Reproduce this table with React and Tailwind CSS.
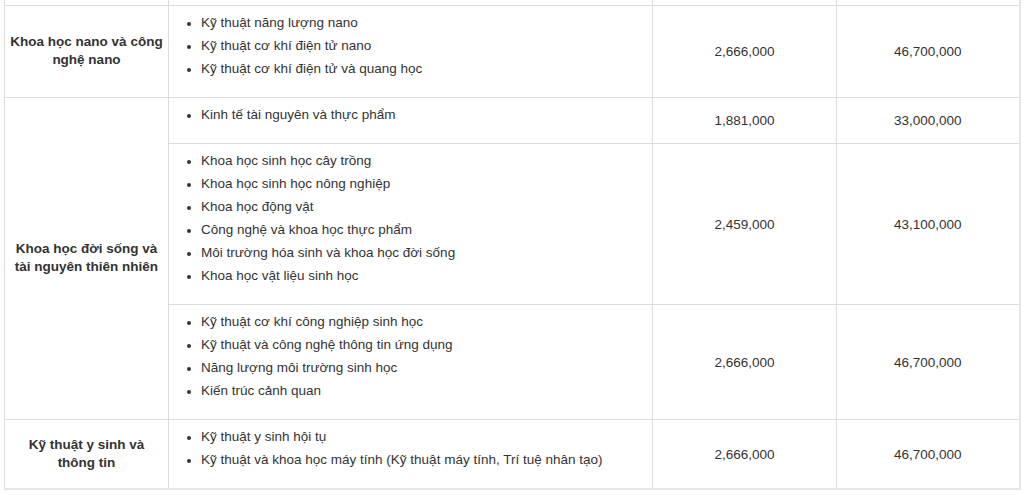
import React from 'react';

const rows = [
  {
    group: 'Khoa học nano và công nghệ nano',
    span: 1,
    majors: ['Kỹ thuật năng lượng nano', 'Kỹ thuật cơ khí điện tử nano', 'Kỹ thuật cơ khí điện tử và quang học'],
    semester: '2,666,000',
    year: '46,700,000',
  },
  {
    group: 'Khoa học đời sống và tài nguyên thiên nhiên',
    span: 3,
    majors: ['Kinh tế tài nguyên và thực phẩm'],
    semester: '1,881,000',
    year: '33,000,000',
  },
  {
    majors: [
      'Khoa học sinh học cây trồng',
      'Khoa học sinh học nông nghiệp',
      'Khoa học động vật',
      'Công nghệ và khoa học thực phẩm',
      'Môi trường hóa sinh và khoa học đời sống',
      'Khoa học vật liệu sinh học',
    ],
    semester: '2,459,000',
    year: '43,100,000',
  },
  {
    majors: [
      'Kỹ thuật cơ khí công nghiệp sinh học',
      'Kỹ thuật và công nghệ thông tin ứng dụng',
      'Năng lượng môi trường sinh học',
      'Kiến trúc cảnh quan',
    ],
    semester: '2,666,000',
    year: '46,700,000',
  },
  {
    group: 'Kỹ thuật y sinh và thông tin',
    span: 1,
    majors: ['Kỹ thuật y sinh hội tụ', 'Kỹ thuật và khoa học máy tính (Kỹ thuật máy tính, Trí tuệ nhân tạo)'],
    semester: '2,666,000',
    year: '46,700,000',
  },
];

const cell = 'border border-[#dcdcdc] align-middle';

export default function App() {
  return (
    <div className="bg-white pl-[4px] pr-[5px] pb-[5px] font-['Liberation_Sans',Arial,sans-serif] text-[13.5px] text-[#333]">
      <table className="w-[1015px] table-fixed border-collapse border-r-2 border-b-2 border-[#e6e6e6]">
        <colgroup>
          <col className="w-[164px]" />
          <col className="w-[484px]" />
          <col className="w-[184px]" />
          <col className="w-[183px]" />
        </colgroup>
        <tbody>
          <tr>
            <td className={`${cell} h-[5px] border-t-0 p-0 leading-none`}></td>
            <td className={`${cell} h-[5px] border-t-0 p-0 leading-none`}></td>
            <td className={`${cell} h-[5px] border-t-0 p-0 leading-none`}></td>
            <td className={`${cell} h-[5px] border-t-0 p-0 leading-none`}></td>
          </tr>
          {rows.map((r, i) => (
            <tr key={i}>
              {r.group && (
                <td rowSpan={r.span} className={`${cell} px-[4px] text-center font-bold leading-[18px]`}>
                  {r.group}
                </td>
              )}
              <td className={`${cell} pt-[5px] pb-[5px] pl-[8px] pr-[8px]`}>
                <ul className="mb-[12px] list-disc pl-[24px] leading-[23px]">
                  {r.majors.map((m) => (
                    <li key={m} className="marker:text-[12px]">{m}</li>
                  ))}
                </ul>
              </td>
              <td className={`${cell} pt-[3px] text-center`}>{r.semester}</td>
              <td className={`${cell} pt-[3px] text-center`}>{r.year}</td>
            </tr>
          ))}
        </tbody>
      </table>
    </div>
  );
}
